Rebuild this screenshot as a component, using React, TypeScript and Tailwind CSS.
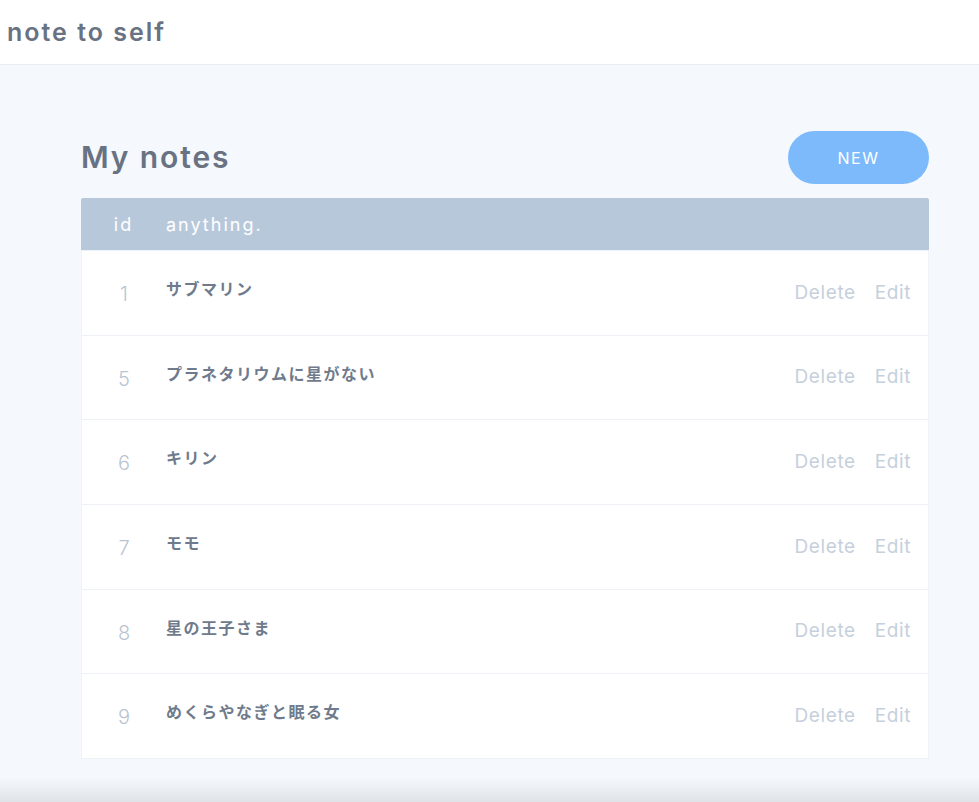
import { useState } from 'react';

type Note = { id: number; body: string };

const NOTES: Note[] = [
  { id: 1, body: 'サブマリン' },
  { id: 5, body: 'プラネタリウムに星がない' },
  { id: 6, body: 'キリン' },
  { id: 7, body: 'モモ' },
  { id: 8, body: '星の王子さま' },
  { id: 9, body: 'めくらやなぎと眠る女' },
];

const font = "font-['Inter','Noto_Sans_CJK_JP',sans-serif]";

export default function App() {
  const [notes] = useState(NOTES);

  return (
    <div className={`${font} min-h-[802px] bg-[#f5f8fc] flex flex-col`}>
      <header className="h-[65px] bg-white border-b border-[#e9eef4] flex items-center px-[7px]">
        <h1 className="text-[25px] font-semibold text-[#687282] tracking-[2px] pt-[1px]">note to self</h1>
      </header>

      <main className="flex-1 pl-[81px] pt-[66px]">
        <div className="w-[848px]">
          <div className="flex items-center justify-between h-[53px] mb-[14px]">
            <h2 className="text-[30px] font-semibold text-[#687282] tracking-[1.9px]">My notes</h2>
            <button
              type="button"
              className="w-[141px] h-[53px] rounded-full bg-[#7dbafc] text-white text-[16px] tracking-[1.6px]"
            >
              NEW
            </button>
          </div>

          <div className="bg-white rounded-t-[2px] border-b border-[#eef1f5]">
            <div className="h-[52px] bg-[#b8c8db] flex items-center text-white text-[18px] tracking-[2px] rounded-t-[2px]">
              <span className="w-[85px] text-center">id</span>
              <span>anything.</span>
            </div>
            {notes.map(n => (
              <NoteRow key={n.id} note={n} />
            ))}
          </div>
        </div>
      </main>

      <div className="h-[24px] bg-gradient-to-b from-[#f5f8fc] to-[#dfe3e8]" />
    </div>
  );
}

function NoteRow({ note }: { note: Note }) {
  return (
    <div className="h-[84.7px] flex items-center border-t border-[#eef1f5] first:border-t-0 border-x border-x-[#f0f3f7]">
      <span className="w-[84px] text-center text-[20px] font-light text-[#b9c4d1] pt-[2px]">{note.id}</span>
      <span className="flex-1 text-[16px] font-semibold text-[#6f7b8c] tracking-[1.5px] pb-[8px]">{note.body}</span>
      <div className="flex items-center gap-[19px] pr-[17px] text-[19px] text-[#c6d0dc] tracking-[0.6px]">
        <button type="button">Delete</button>
        <button type="button">Edit</button>
      </div>
    </div>
  );
}
